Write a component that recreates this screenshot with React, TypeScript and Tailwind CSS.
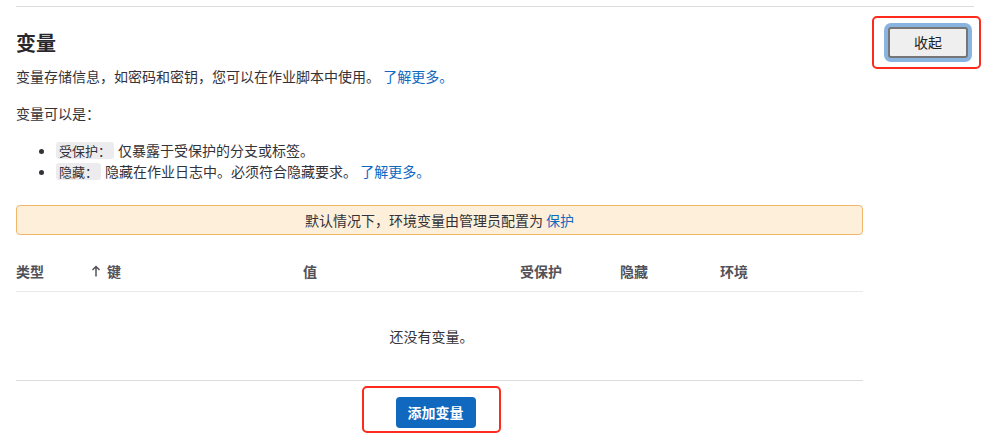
import React from "react";

const font = { fontFamily: '"Noto Sans CJK SC", "Noto Sans", sans-serif' };

const Badge = ({ children }: { children: React.ReactNode }) => (
  <span className="inline-block bg-[#ececef] rounded-[3px] px-[3px] text-[13px] leading-[17px] text-[#333238] mr-[4px]">
    {children}
  </span>
);

const App = () => {
  return (
    <div className="w-[988px] h-[444px] bg-white pl-4 pr-[14px] overflow-hidden text-[#333238]" style={font}>
      <div className="mt-[6px] border-t border-[#dcdcde]" />
      <div className="flex">
        <div className="w-[847px] shrink-0">
          <h2 className="mt-[22px] text-[20px] leading-[28px] font-bold text-[#28272d]">变量</h2>
          <p className="mt-[9px] text-[14px] leading-[20px]">
            变量存储信息，如密码和密钥，您可以在作业脚本中使用。{" "}
            <span className="text-[#1068bf]">了解更多。</span>
          </p>
          <p className="mt-[17px] text-[14px] leading-[20px]">变量可以是：</p>
          <ul className="mt-[17px] ml-10 list-disc text-[14px] leading-[21px]">
            <li>
              <Badge>受保护：</Badge>仅暴露于受保护的分支或标签。
            </li>
            <li>
              <Badge>隐藏：</Badge>隐藏在作业日志中。必须符合隐藏要求。{" "}
              <span className="text-[#1068bf]">了解更多。</span>
            </li>
          </ul>
          <div className="mt-[23px] h-[30px] flex items-center justify-center bg-[#fdefd9] border border-[#eeb868] rounded-[4px] text-[14px]">
            默认情况下，环境变量由管理员配置为&nbsp;<span className="text-[#1068bf]">保护</span>
          </div>
          <div className="mt-[16px] h-[41px] grid grid-cols-[75px_212px_217px_100px_100px_1fr] items-center border-b border-[#e9e9eb] text-[14px] font-bold text-[#535158]">
            <span>类型</span>
            <span className="flex items-center gap-[6px]">
              <svg width="10" height="12" viewBox="0 0 10 12" fill="none" stroke="#535158" strokeWidth="1.5">
                <path d="M5 11.5V1.5M1.5 5L5 1.5L8.5 5" />
              </svg>
              键
            </span>
            <span>值</span>
            <span>受保护</span>
            <span>隐藏</span>
            <span>环境</span>
          </div>
          <div className="h-[89px] flex items-center justify-center pr-[16px] border-b border-[#dcdcde] text-[14px]">
            还没有变量。
          </div>
          <div className="flex justify-center pr-[8px]">
            <div className="relative mt-[16px]">
              <button className="w-[80px] h-[31px] rounded-[4px] bg-[#1068bf] text-white text-[14px] font-bold">
                添加变量
              </button>
              <div className="absolute left-[-34px] top-[-11px] w-[139px] h-[47px] border-2 border-[#fe2a1c] rounded-[5px]" />
            </div>
          </div>
        </div>
        <div className="shrink-0 ml-[9px] mt-[9px]">
          <div className="w-[109px] h-[53px] border-2 border-[#fe2a1c] rounded-[5px] pl-[14px] pt-[9px]">
            <button className="w-[80px] h-[31px] bg-[#efefef] border-2 border-[#767676] rounded-[3px] ring-4 ring-[#8ab4e0] text-[14px] font-normal text-[#222]">
              收起
            </button>
          </div>
        </div>
      </div>
    </div>
  );
};

export default App;
